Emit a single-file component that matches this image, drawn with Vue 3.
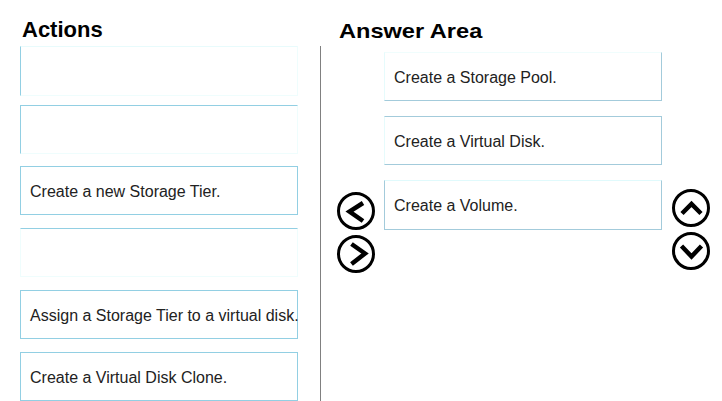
<script setup>
const actions = [
  { id: 1, text: '', cls: 'a1' },
  { id: 2, text: '', cls: 'a2' },
  { id: 3, text: 'Create a new Storage Tier.', cls: 'a3' },
  { id: 4, text: '', cls: 'a4' },
  { id: 5, text: 'Assign a Storage Tier to a virtual disk.', cls: 'a5' },
  { id: 6, text: 'Create a Virtual Disk Clone.', cls: 'a6' }
]
const answers = [
  { id: 1, text: 'Create a Storage Pool.', cls: 'b1' },
  { id: 2, text: 'Create a Virtual Disk.', cls: 'b2' },
  { id: 3, text: 'Create a Volume.', cls: 'b3' }
]
</script>

<template>
  <div class="page">
    <section class="actions">
      <h2 class="title">Actions</h2>
      <div class="list">
        <div v-for="a in actions" :key="a.id" class="box" :class="a.cls">{{ a.text }}</div>
      </div>
    </section>
    <div class="divider"></div>
    <section class="answer">
      <h2 class="title wide"><span class="stretch">Answer Area</span></h2>
      <div class="answer-row">
        <div class="arrows lr">
          <svg class="icon" viewBox="0 0 40 40"><circle cx="20" cy="20" r="17.5" /><path d="M27 12 L13.5 20.5 L27 30" /></svg>
          <svg class="icon" viewBox="0 0 40 40"><circle cx="20" cy="20" r="17.5" /><path d="M15.5 10 L29 19.5 L15.5 30" /></svg>
        </div>
        <div class="list answers">
          <div v-for="b in answers" :key="b.id" class="box" :class="b.cls">{{ b.text }}</div>
        </div>
        <div class="arrows ud">
          <svg class="icon" viewBox="0 0 40 40"><circle cx="20" cy="20" r="17.5" /><path d="M11 25.5 L20.5 16 L30 25.5" /></svg>
          <svg class="icon" viewBox="0 0 40 40"><circle cx="20" cy="20" r="17.5" /><path d="M10.5 15 L20.5 25.5 L30.5 15" /></svg>
        </div>
      </div>
    </section>
  </div>
</template>

<style scoped>
.page {
  display: flex;
  width: 722px;
  height: 401px;
  overflow: hidden;
  background: #fff;
  color: #222;
  font-family: "Liberation Sans", Arial, sans-serif;
}
.actions {
  width: 278px;
  margin-left: 20px;
  flex: none;
}
.title {
  margin: 0;
  height: 46px;
  padding: 17px 0 0 2px;
  box-sizing: border-box;
  font-size: 22px;
  line-height: 26px;
  font-weight: 700;
  color: #000;
}
.wide {
  height: 52px;
  padding: 18px 0 0 0;
  font-size: 20.5px;
}
.stretch {
  display: inline-block;
  transform: scaleX(1.15);
  transform-origin: left center;
}
.list {
  display: flex;
  flex-direction: column;
}
.box {
  box-sizing: border-box;
  width: 278px;
  height: 49px;
  padding: 2px 0 0 9px;
  display: flex;
  align-items: center;
  font-size: 16px;
  white-space: nowrap;
  border: 1px solid #92cfe3;
}
.a1 { height: 50px; border-color: #effdfd; border-left-color: #92cfe3; border-top-color: #e8fbfc; }
.a2 { margin-top: 9px; border-color: #effdfd; border-top-color: #92cfe3; border-left-color: #92cfe3; }
.a3 { margin-top: 12px; }
.a4 { margin-top: 13px; border-color: #effdfd; border-top-color: #92cfe3; }
.a5 { margin-top: 13px; }
.a6 { margin-top: 13px; }
.divider {
  width: 1px;
  height: 355px;
  margin: 46px 0 0 22px;
  background: #808080;
  flex: none;
}
.answer {
  margin-left: 18px;
  flex: 1;
}
.answer-row {
  display: flex;
}
.arrows {
  flex: none;
  display: flex;
  flex-direction: column;
  gap: 3px;
}
.lr {
  width: 45px;
  margin-left: -3px;
  padding: 139px 3px 0 0;
}
.ud {
  margin-left: 9px;
  padding-top: 136px;
}
.icon {
  display: block;
  width: 40px;
  height: 40px;
  fill: none;
  stroke: #000;
}
.icon circle { stroke-width: 3; }
.icon path { stroke-width: 4.5; stroke-linejoin: miter; }
.answers { width: 278px; flex: none; }
.box.b1 { border-color: #a3cbdb; border-left-color: #e6fbfc; border-top-color: #f0fdfd; }
.box.b2 { margin-top: 15px; border-color: #a3cbdb; border-left-color: #e6fbfc; }
.box.b3 { margin-top: 15px; height: 50px; padding: 2px 0 1px 9px; border-color: #a3cbdb; border-top-color: #e0fafc; }
</style>
